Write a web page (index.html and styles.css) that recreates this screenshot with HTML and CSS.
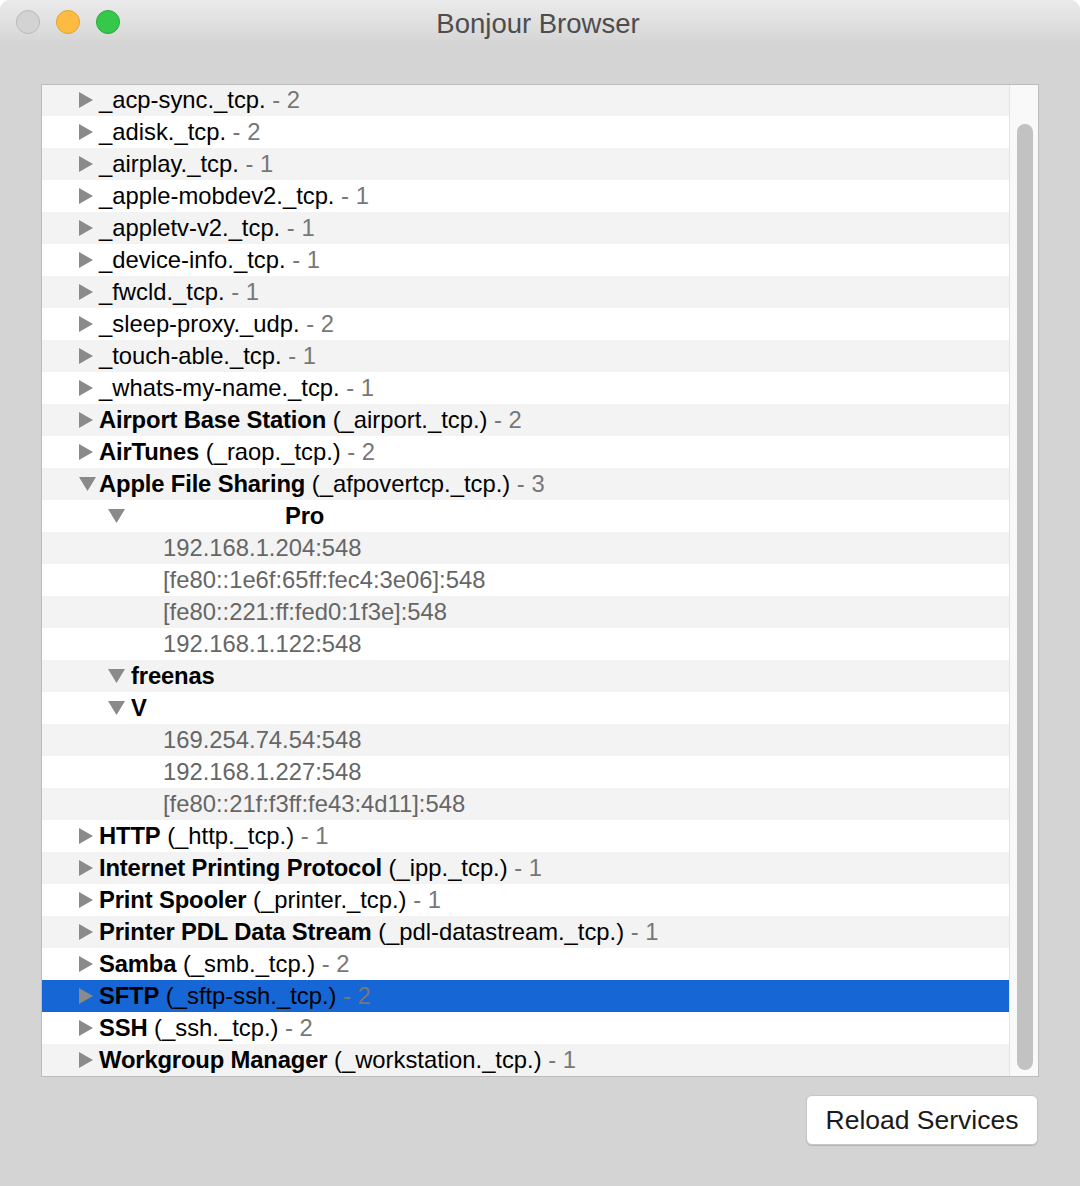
FILE: index.html
```html
<!DOCTYPE html>
<html lang="en">
<head>
    <meta charset="UTF-8">
    <title>Bonjour Browser</title>
    <link rel="stylesheet" href="styles.css">
</head>
<body>
    <div class="window">
        <div class="titlebar">
            <div class="lights">
                <span class="light close"></span>
                <span class="light min"></span>
                <span class="light max"></span>
            </div>
            <div class="title">Bonjour Browser</div>
        </div>

        <div class="content">
            <div class="browser">
                <div class="list" id="list"></div>
                <div class="scrollbar"><div class="thumb"></div></div>
            </div>
            <div class="actions">
                <button class="reload">Reload Services</button>
            </div>
        </div>
    </div>

    <script>
        // level, open (null = no arrow), bold name, rest, count, extra class
        const rows = [
            [0, false, '', '_acp-sync._tcp.', '2'],
            [0, false, '', '_adisk._tcp.', '2'],
            [0, false, '', '_airplay._tcp.', '1'],
            [0, false, '', '_apple-mobdev2._tcp.', '1'],
            [0, false, '', '_appletv-v2._tcp.', '1'],
            [0, false, '', '_device-info._tcp.', '1'],
            [0, false, '', '_fwcld._tcp.', '1'],
            [0, false, '', '_sleep-proxy._udp.', '2'],
            [0, false, '', '_touch-able._tcp.', '1'],
            [0, false, '', '_whats-my-name._tcp.', '1'],
            [0, false, 'Airport Base Station', '(_airport._tcp.)', '2'],
            [0, false, 'AirTunes', '(_raop._tcp.)', '2'],
            [0, true, 'Apple File Sharing', '(_afpovertcp._tcp.)', '3'],
            [1, true, 'Pro', '', '', 'hidden-name'],
            [2, null, '', '192.168.1.204:548'],
            [2, null, '', '[fe80::1e6f:65ff:fec4:3e06]:548'],
            [2, null, '', '[fe80::221:ff:fed0:1f3e]:548'],
            [2, null, '', '192.168.1.122:548'],
            [1, true, 'freenas', '', ''],
            [1, true, 'V', '', ''],
            [2, null, '', '169.254.74.54:548'],
            [2, null, '', '192.168.1.227:548'],
            [2, null, '', '[fe80::21f:f3ff:fe43:4d11]:548'],
            [0, false, 'HTTP', '(_http._tcp.)', '1'],
            [0, false, 'Internet Printing Protocol', '(_ipp._tcp.)', '1'],
            [0, false, 'Print Spooler', '(_printer._tcp.)', '1'],
            [0, false, 'Printer PDL Data Stream', '(_pdl-datastream._tcp.)', '1'],
            [0, false, 'Samba', '(_smb._tcp.)', '2'],
            [0, false, 'SFTP', '(_sftp-ssh._tcp.)', '2', 'selected'],
            [0, false, 'SSH', '(_ssh._tcp.)', '2'],
            [0, false, 'Workgroup Manager', '(_workstation._tcp.)', '1']
        ];

        const arrowRight = '<svg width="14" height="16" viewBox="0 0 14 16"><path d="M0 0 L14 8 L0 16 Z"/></svg>';
        const arrowDown = '<svg width="17" height="14" viewBox="0 0 17 14"><path d="M0 0 L17 0 L8.5 14 Z"/></svg>';

        const list = document.getElementById('list');
        rows.forEach(function (r, i) {
            const row = document.createElement('div');
            row.className = 'row level-' + r[0] + (i % 2 === 0 ? ' striped' : '');
            if (r[5]) row.className += ' ' + r[5];

            let html = '';
            if (r[1] === null) {
                html += '<span class="addr">' + r[3] + '</span>';
            } else {
                html += '<span class="arrow">' + (r[1] ? arrowDown : arrowRight) + '</span>';
                html += '<span class="label">';
                if (r[2]) html += '<b>' + r[2] + '</b>';
                if (r[2] && r[3]) html += ' ';
                if (r[3]) html += r[3];
                if (r[4]) html += ' <span class="count">- ' + r[4] + '</span>';
                html += '</span>';
            }
            row.innerHTML = html;
            list.appendChild(row);
        });
    </script>
</body>
</html>
```

FILE: styles.css
```css
body {
    margin: 0;
    background-color: #fff;
    font-family: "Liberation Sans", Arial, sans-serif;
}

.window {
    width: 1080px;
    height: 1186px;
    background-color: #d4d4d4;
    border-radius: 10px 10px 0 0;
    overflow: hidden;
    display: flex;
    flex-direction: column;
}

.titlebar {
    height: 46px;
    position: relative;
    background: linear-gradient(#ebebeb, #d4d4d4);
    display: flex;
    align-items: center;
    justify-content: center;
}

.lights {
    position: absolute;
    left: 16px;
    top: 10px;
    display: flex;
    gap: 16px;
}

.light {
    width: 22px;
    height: 22px;
    border-radius: 50%;
    border: 1px solid;
}

.light.close {
    background-color: #d3d3d3;
    border-color: #b8b8b8;
}

.light.min {
    background-color: #fdbc41;
    border-color: #dea236;
}

.light.max {
    background-color: #35c84b;
    border-color: #27a93a;
}

.title {
    font-size: 27.5px;
    color: #4d4d4d;
    margin-top: 1px;
    margin-right: 4px;
}

.content {
    padding: 38px 41px 0 41px;
}

.browser {
    height: 991px;
    border: 1px solid #bcbcbc;
    background-color: #fff;
    display: flex;
    overflow: hidden;
}

.list {
    flex: 1;
    margin-top: -1px;
}

.row {
    height: 32px;
    line-height: 32px;
    display: flex;
    align-items: center;
    font-size: 23.8px;
    color: #000;
    white-space: nowrap;
}

.row.striped {
    background-color: #f3f3f3;
}

.row.selected {
    background-color: #1766d6;
}

.row.level-0 {
    padding-left: 36px;
}

.row.level-1 {
    padding-left: 66px;
}

.row.level-2 {
    padding-left: 121px;
}

.arrow {
    display: inline-flex;
    width: 21px;
    height: 32px;
    align-items: center;
}

.level-1 .arrow {
    width: 23px;
}

.arrow svg {
    fill: #8a8a8a;
}

.row.level-0 .arrow svg {
    margin-left: 1px;
}

.label b {
    font-weight: bold;
    letter-spacing: -0.15px;
}

.count {
    color: #777;
}

.addr {
    color: #666;
}

.hidden-name .label {
    padding-left: 154px;
}

.scrollbar {
    width: 29px;
    border-left: 1px solid #e4e4e4;
    background-color: #f9f9f9;
    padding: 39px 6px 6px 7px;
    box-sizing: border-box;
}

.thumb {
    width: 16px;
    height: 946px;
    background-color: #c2c2c2;
    border-radius: 8px;
}

.actions {
    display: flex;
    justify-content: flex-end;
    margin-top: 18px;
    padding-right: 1px;
}

.reload {
    width: 232px;
    height: 50px;
    background-color: #fff;
    border: 1px solid #c6c6c6;
    border-radius: 6px;
    box-shadow: 0 1px 1px rgba(0, 0, 0, 0.15);
    font-family: "Liberation Sans", Arial, sans-serif;
    font-size: 26.5px;
    color: #1a1a1a;
    padding: 0;
}
```
